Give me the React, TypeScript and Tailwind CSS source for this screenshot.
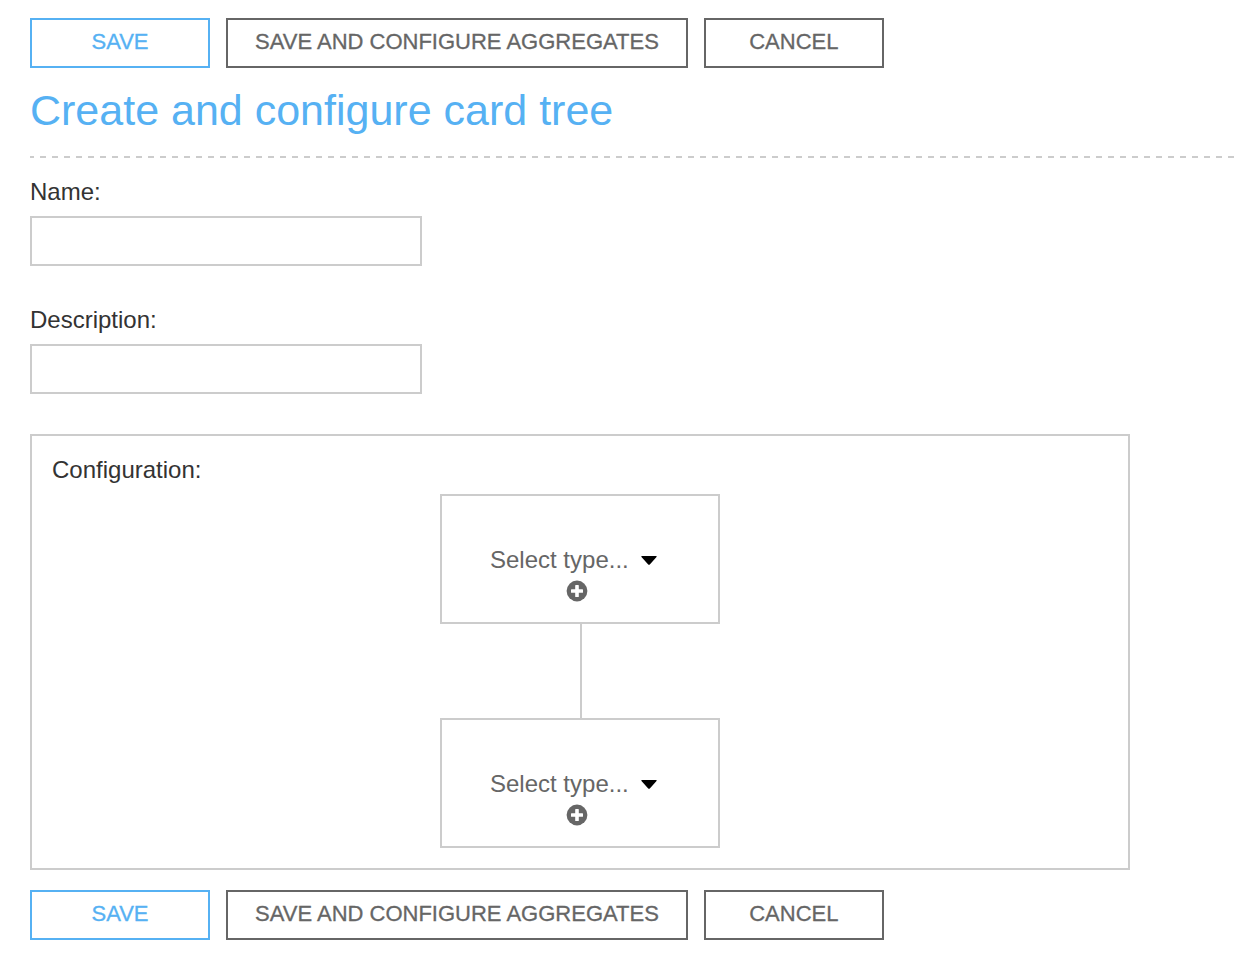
import React from "react";

const buttonBase =
  "h-[50px] min-w-[180px] cursor-pointer border-2 bg-white px-[27px] pb-0.5 text-[22px] leading-6 uppercase [-webkit-text-stroke:0.3px_currentColor]";

function Actions() {
  return (
    <div className="flex flex-wrap gap-4">
      <button type="submit" className={`${buttonBase} border-[#56b1f3] text-[#56b1f3]`}>
        Save
      </button>
      <button type="button" className={`${buttonBase} border-[#666666] text-[#666666]`}>
        Save and configure aggregates
      </button>
      <button type="button" className={`${buttonBase} border-[#666666] text-[#666666]`}>
        Cancel
      </button>
    </div>
  );
}

function Field({ id, label }: { id: string; label: string }) {
  return (
    <div className="mb-[38px] flex flex-col items-start">
      <label htmlFor={id} className="mb-2 text-2xl leading-8">
        {label}
      </label>
      <input
        id={id}
        type="text"
        className="h-[50px] w-full max-w-[392px] border-2 border-[#cccccc] bg-white px-3 text-2xl outline-none"
      />
    </div>
  );
}

function TypeNode({ label }: { label: string }) {
  return (
    <div className="flex h-[130px] flex-col items-start border-2 border-[#cccccc] px-12 pt-12">
      <div className="grid items-center">
        <select
          aria-label={label}
          className="col-start-1 row-start-1 h-8 w-[170px] cursor-pointer appearance-none bg-transparent text-2xl leading-8 text-[#666666] outline-none"
        >
          <option>Select type...</option>
        </select>
        <svg
          aria-hidden="true"
          viewBox="0 0 16 9"
          className="pointer-events-none col-start-1 row-start-1 mr-[3px] h-[9px] w-4 justify-self-end"
        >
          <path d="M0.6 0H15.4Q16 0.5 15.3 1.2L8.8 8.4Q8 9.2 7.2 8.4L0.7 1.2Q0 0.5 0.6 0Z" fill="#000000" />
        </svg>
      </div>
      <button type="button" aria-label="Add child card" className="mt-1 ml-[76px] cursor-pointer">
        <svg viewBox="0 0 22 22" className="block h-[22px] w-[22px]">
          <circle cx="11" cy="11" r="10.4" fill="#666666" />
          <path
            d="M9.8 5H12.2Q12.8 5 12.8 5.6V9.2H16.4Q17 9.2 17 9.8V12.2Q17 12.8 16.4 12.8H12.8V16.4Q12.8 17 12.2 17H9.8Q9.2 17 9.2 16.4V12.8H5.6Q5 12.8 5 12.2V9.8Q5 9.2 5.6 9.2H9.2V5.6Q9.2 5 9.8 5Z"
            fill="#ffffff"
          />
        </svg>
      </button>
    </div>
  );
}

export default function App() {
  return (
    <form
      onSubmit={(event) => event.preventDefault()}
      className="min-h-screen bg-white pt-[18px] pb-5 pl-[30px] font-['Liberation_Sans',Arial,sans-serif] text-[#333333]"
    >
      <Actions />
      <h1 className="mt-3.5 text-[43px] leading-[56px] text-[#56b1f3]">Create and configure card tree</h1>
      <div className="my-[18px] h-0.5 bg-[repeating-linear-gradient(to_right,#cccccc_0_4px,transparent_4px_10px,#cccccc_10px_12px)]" />
      <Field id="name" label="Name:" />
      <Field id="description" label="Description:" />
      <section
        aria-labelledby="configuration"
        className="mt-10 mb-5 max-w-[1100px] border-2 border-[#cccccc] px-5 pt-[18px] pb-5"
      >
        <h2 id="configuration" className="text-2xl leading-8">
          Configuration:
        </h2>
        <div className="mx-auto mt-2 flex w-[280px] flex-col">
          <TypeNode label="Parent card type" />
          <div className="h-[94px] w-1/2 self-end border-l-2 border-[#cccccc]" />
          <TypeNode label="Child card type" />
        </div>
      </section>
      <Actions />
    </form>
  );
}
